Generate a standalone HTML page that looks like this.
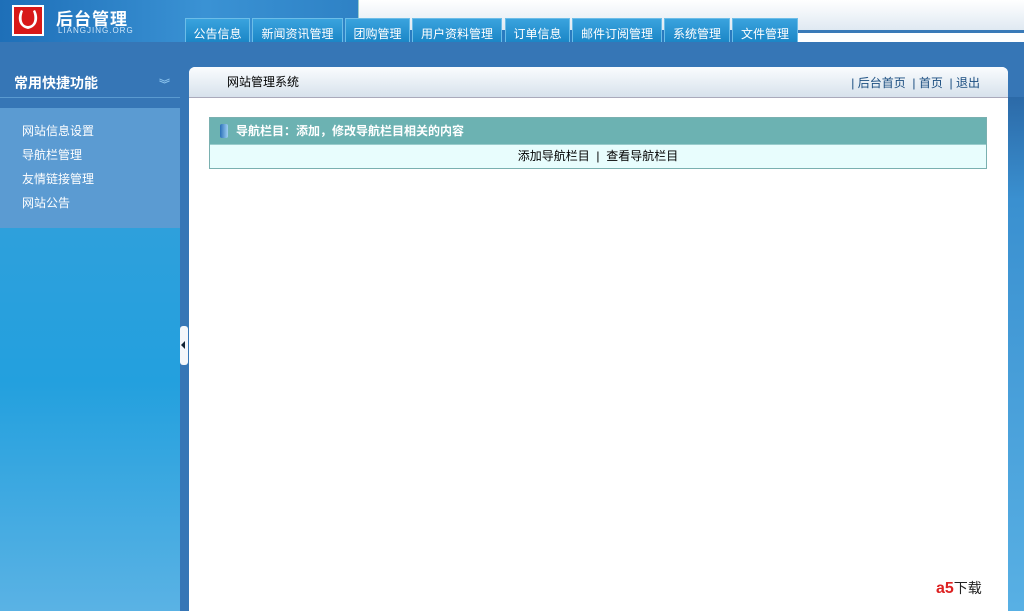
<!DOCTYPE html>
<html><head><meta charset="utf-8"><style>
*{margin:0;padding:0;box-sizing:border-box}
body{width:1024px;height:611px;overflow:hidden;position:relative;background:#3676b6;font-family:"Liberation Sans","Noto Sans CJK SC",sans-serif;font-size:12px}
.top{position:absolute;left:0;top:0;width:1024px;height:42px;background:linear-gradient(90deg,#1e6fb8 0%,#3a92d4 20%,#2a7cc0 40%,#2a78bc 100%)}
.topw{position:absolute;left:358px;top:0;width:666px;height:30px;background:linear-gradient(#fff,#dfe9f2);border-left:1px solid #9cc}
.line{position:absolute;left:798px;top:30px;width:226px;height:12px;background:#fff;border-top:3px solid #3a7ab8}
.logo{position:absolute;left:12px;top:5px;width:32px;height:31px;background:#d81818;border:2px solid #fff;overflow:hidden}
.lt{position:absolute;left:56px;top:5px;color:#fff;font-weight:bold;font-size:17px;letter-spacing:1px}
.ls{position:absolute;left:58px;top:26px;color:#cfe6f8;font-size:8px;letter-spacing:1px}
.tab{position:absolute;top:18px;height:24px;background:linear-gradient(#3aa3de,#1b86c6);border:1px solid #6cbde8;border-bottom:none;color:#fff;font-size:12px;line-height:24px;padding-top:3px;text-align:center}
.side{position:absolute;left:0;top:228px;width:180px;height:383px;background:linear-gradient(#2ea0dc 0%,#23a0de 40%,#5ab2e4 100%)}
.sh{position:absolute;left:0;top:68px;width:180px;height:30px;background:#3676b6;color:#fff;font-weight:bold;font-size:14px;line-height:30px;padding-left:14px;border-bottom:1px solid #5a9ad0}
.sh span{position:absolute;right:10px;top:2px;color:#8cc4ee;font-size:11px}
.menu{position:absolute;left:0;top:108px;width:180px;height:120px;background:#5b9bd2;padding-top:14px}
.menu div{color:#fff;padding-left:22px;height:24px;line-height:18px}
.div{position:absolute;left:180px;top:42px;width:9px;height:569px;background:#3676b6}
.hdl{position:absolute;left:180px;top:326px;width:8px;height:39px;background:#f4f6fa;border-radius:3px}
.hdl:after{content:"";position:absolute;left:1px;top:15px;border:4px solid transparent;border-right:4px solid #123;border-left:0}
.main{position:absolute;left:189px;top:67px;width:819px;height:544px;background:#fff;border-radius:6px 6px 0 0}
.mh{height:31px;border-radius:6px 6px 0 0;background:linear-gradient(#fafcfe,#d7e2ec);border-bottom:1px solid #aab;position:relative}
.mh .t{position:absolute;left:38px;top:6px}
.mh .r{position:absolute;right:28px;top:7px;color:#1a4d80}
.tbl{position:absolute;left:20px;top:50px;width:778px;border:1px solid #7ab0b0}
.th{height:26px;background:#6cb2b2;color:#fff;font-weight:bold;line-height:26px;padding-left:26px;position:relative}
.th:before{content:"";position:absolute;left:10px;top:6px;width:8px;height:14px;background:linear-gradient(90deg,#2a70b8,#9fd0f4);border-radius:2px}
.tb{height:24px;background:#e8fdfd;text-align:center;line-height:23px;border-top:1px solid #9cc}
.rs{position:absolute;left:1008px;top:97px;width:16px;height:514px;background:linear-gradient(#2c6aa8,#3a90d0 20%,#58b0e4)}
.a5{position:absolute;left:936px;top:578px;font-weight:bold;color:#d22;font-size:16px}
</style></head><body>
<div class="top"></div><div class="topw"></div><div class="line"></div>
<div class="logo"><svg width="28" height="27" viewBox="0 0 28 27"><path d="M7 3 C3 10 4 20 14 22 C24 20 25 10 21 3 L19 4 C22 12 20 19 14 19 C8 19 6 12 9 4 Z" fill="#fff"/></svg></div>
<div class="lt">后台管理</div><div class="ls">LIANGJING.ORG</div>
<div class="tab" style="left:185px;width:65px">公告信息</div>
<div class="tab" style="left:252px;width:91px">新闻资讯管理</div>
<div class="tab" style="left:345px;width:65px">团购管理</div>
<div class="tab" style="left:412px;width:90px">用户资料管理</div>
<div class="tab" style="left:505px;width:65px">订单信息</div>
<div class="tab" style="left:572px;width:90px">邮件订阅管理</div>
<div class="tab" style="left:664px;width:66px">系统管理</div>
<div class="tab" style="left:732px;width:66px">文件管理</div>
<div class="side"></div>
<div class="sh">常用快捷功能<span>︾</span></div>
<div class="menu"><div>网站信息设置</div><div>导航栏管理</div><div>友情链接管理</div><div>网站公告</div></div>
<div class="div"></div><div class="hdl"></div>
<div class="rs"></div>
<div class="main"><div class="mh"><span class="t">网站管理系统</span><span class="r">| 后台首页 &nbsp;| 首页 &nbsp;| 退出</span></div>
<div class="tbl"><div class="th">导航栏目：添加，修改导航栏目相关的内容</div><div class="tb">添加导航栏目 &nbsp;| &nbsp;查看导航栏目</div></div></div>
<div class="a5">a5<span style="color:#222;font-weight:normal;font-size:14px">下载</span></div>
</body></html>
